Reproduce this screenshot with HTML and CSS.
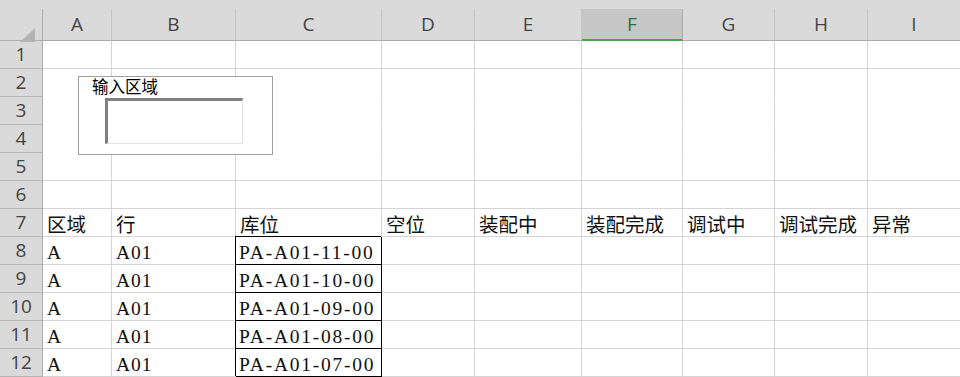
FILE: index.html
```html
<!DOCTYPE html>
<html lang="zh-CN">
<head>
    <meta charset="UTF-8">
    <title>库位状态表</title>
    <link rel="stylesheet" href="styles.css">
</head>
<body>
    <div class="sheet">
        <div class="topstrip"></div>

        <div class="grid">
            <!-- column headers -->
            <div class="corner"><span class="tri"></span></div>
            <div class="colhead">A</div>
            <div class="colhead">B</div>
            <div class="colhead">C</div>
            <div class="colhead">D</div>
            <div class="colhead">E</div>
            <div class="colhead active">F</div>
            <div class="colhead">G</div>
            <div class="colhead">H</div>
            <div class="colhead">I</div>

            <!-- rows 1-6 are empty -->
            <div class="rowhead">1</div>
            <div class="cell"></div><div class="cell"></div><div class="cell"></div><div class="cell"></div><div class="cell"></div><div class="cell"></div><div class="cell"></div><div class="cell"></div><div class="cell"></div>

            <div class="rowhead">2</div>
            <div class="cell open"></div><div class="cell open"></div><div class="cell open"></div><div class="cell open"></div><div class="cell open"></div><div class="cell open"></div><div class="cell open"></div><div class="cell open"></div><div class="cell open"></div>

            <div class="rowhead">3</div>
            <div class="cell open"></div><div class="cell open"></div><div class="cell open"></div><div class="cell open"></div><div class="cell open"></div><div class="cell open"></div><div class="cell open"></div><div class="cell open"></div><div class="cell open"></div>

            <div class="rowhead">4</div>
            <div class="cell open"></div><div class="cell open"></div><div class="cell open"></div><div class="cell open"></div><div class="cell open"></div><div class="cell open"></div><div class="cell open"></div><div class="cell open"></div><div class="cell open"></div>

            <div class="rowhead">5</div>
            <div class="cell"></div><div class="cell"></div><div class="cell"></div><div class="cell"></div><div class="cell"></div><div class="cell"></div><div class="cell"></div><div class="cell"></div><div class="cell"></div>

            <div class="rowhead">6</div>
            <div class="cell"></div><div class="cell"></div><div class="cell"></div><div class="cell"></div><div class="cell"></div><div class="cell"></div><div class="cell"></div><div class="cell"></div><div class="cell"></div>

            <div class="rowhead">7</div>
            <div class="cell cjk">区域</div>
            <div class="cell cjk">行</div>
            <div class="cell cjk">库位</div>
            <div class="cell cjk">空位</div>
            <div class="cell cjk">装配中</div>
            <div class="cell cjk">装配完成</div>
            <div class="cell cjk">调试中</div>
            <div class="cell cjk">调试完成</div>
            <div class="cell cjk">异常</div>

            <div class="rowhead">8</div>
            <div class="cell">A</div><div class="cell">A01</div><div class="cell boxed">PA-A01-11-00</div>
            <div class="cell"></div><div class="cell"></div><div class="cell"></div><div class="cell"></div><div class="cell"></div><div class="cell"></div>

            <div class="rowhead">9</div>
            <div class="cell">A</div><div class="cell">A01</div><div class="cell boxed">PA-A01-10-00</div>
            <div class="cell"></div><div class="cell"></div><div class="cell"></div><div class="cell"></div><div class="cell"></div><div class="cell"></div>

            <div class="rowhead">10</div>
            <div class="cell">A</div><div class="cell">A01</div><div class="cell boxed">PA-A01-09-00</div>
            <div class="cell"></div><div class="cell"></div><div class="cell"></div><div class="cell"></div><div class="cell"></div><div class="cell"></div>

            <div class="rowhead">11</div>
            <div class="cell">A</div><div class="cell">A01</div><div class="cell boxed">PA-A01-08-00</div>
            <div class="cell"></div><div class="cell"></div><div class="cell"></div><div class="cell"></div><div class="cell"></div><div class="cell"></div>

            <div class="rowhead">12</div>
            <div class="cell">A</div><div class="cell">A01</div><div class="cell boxed">PA-A01-07-00</div>
            <div class="cell"></div><div class="cell"></div><div class="cell"></div><div class="cell"></div><div class="cell"></div><div class="cell"></div>
        </div>

        <!-- form control floating over rows 2-5 -->
        <div class="groupbox">
            <span class="group-label">输入区域</span>
            <div class="textbox"></div>
        </div>
    </div>
</body>
</html>
```

FILE: styles.css
```css
* {
    margin: 0;
    padding: 0;
    box-sizing: border-box;
}

body {
    background: #fff;
    overflow: hidden;
    font-family: "Liberation Serif", "Noto Sans CJK SC", serif;
}

.sheet {
    position: relative;
    width: 960px;
    height: 377px;
    overflow: hidden;
}

.topstrip {
    height: 9px;
    background: #dadada;
}

.grid {
    display: grid;
    grid-template-columns: 43px 69px 124px 146px 93px 107px 101px 92px 93px 93px;
    grid-template-rows: 32px repeat(12, 28px);
}

.corner {
    position: relative;
    background: #dadada;
    border-right: 1px solid #ababab;
    border-bottom: 1px solid #ababab;
}

.tri {
    position: absolute;
    left: 20px;
    top: 19px;
    width: 0;
    height: 0;
    border-left: 15px solid transparent;
    border-bottom: 14px solid #b3b3b3;
}

.colhead {
    background: #dadada;
    border-right: 1px solid #c6c6c6;
    border-bottom: 1px solid #ababab;
    color: #444;
    font-family: "Open Sans", "Segoe UI", sans-serif;
    font-size: 19px;
    line-height: 30px;
    text-align: center;
}

.colhead.active {
    background: #c6c6c6;
    color: #217346;
    border-right-color: #ababab;
    border-bottom: 2px solid #45a845;
}

.rowhead {
    background: #dadada;
    border-right: 1px solid #ababab;
    border-bottom: 1px solid #b4b4b4;
    color: #444;
    font-family: "Open Sans", "Segoe UI", sans-serif;
    font-size: 19px;
    line-height: 27px;
    text-align: center;
}

.cell {
    border-right: 1px solid #d4d4d4;
    border-bottom: 1px solid #d4d4d4;
    padding: 5px 0 0 4px;
    font-size: 19.5px;
    letter-spacing: 1px;
    line-height: 22px;
    color: #111;
    white-space: nowrap;
    overflow: hidden;
}

.cell.open {
    border-bottom-color: transparent;
}

.cell.cjk {
    font-family: "Noto Sans CJK SC", sans-serif;
    font-size: 19.5px;
    letter-spacing: 0;
    line-height: 22px;
    padding-top: 4px;
    padding-left: 4px;
    overflow: visible;
}

.cell.boxed {
    border-right-color: #000;
    border-bottom-color: #000;
    box-shadow: -1px -1px 0 #000;
    padding-left: 3px;
    letter-spacing: 1.75px;
}

/* group box control */
.groupbox {
    position: absolute;
    left: 78px;
    top: 76px;
    width: 195px;
    height: 79px;
    border: 1px solid #a0a0a0;
    background: #fff;
}

.group-label {
    position: absolute;
    left: 11px;
    top: 0;
    padding: 0 3px 0 2px;
    background: #fff;
    font-family: "Noto Sans CJK SC", sans-serif;
    font-size: 16.5px;
    line-height: 18px;
    color: #000;
}

.textbox {
    position: absolute;
    left: 26px;
    top: 21px;
    width: 138px;
    height: 46px;
    border-top: 3px solid #808080;
    border-left: 3px solid #808080;
    border-right: 1px solid #e3e3e3;
    border-bottom: 1px solid #e3e3e3;
    background: #fff;
}
```
